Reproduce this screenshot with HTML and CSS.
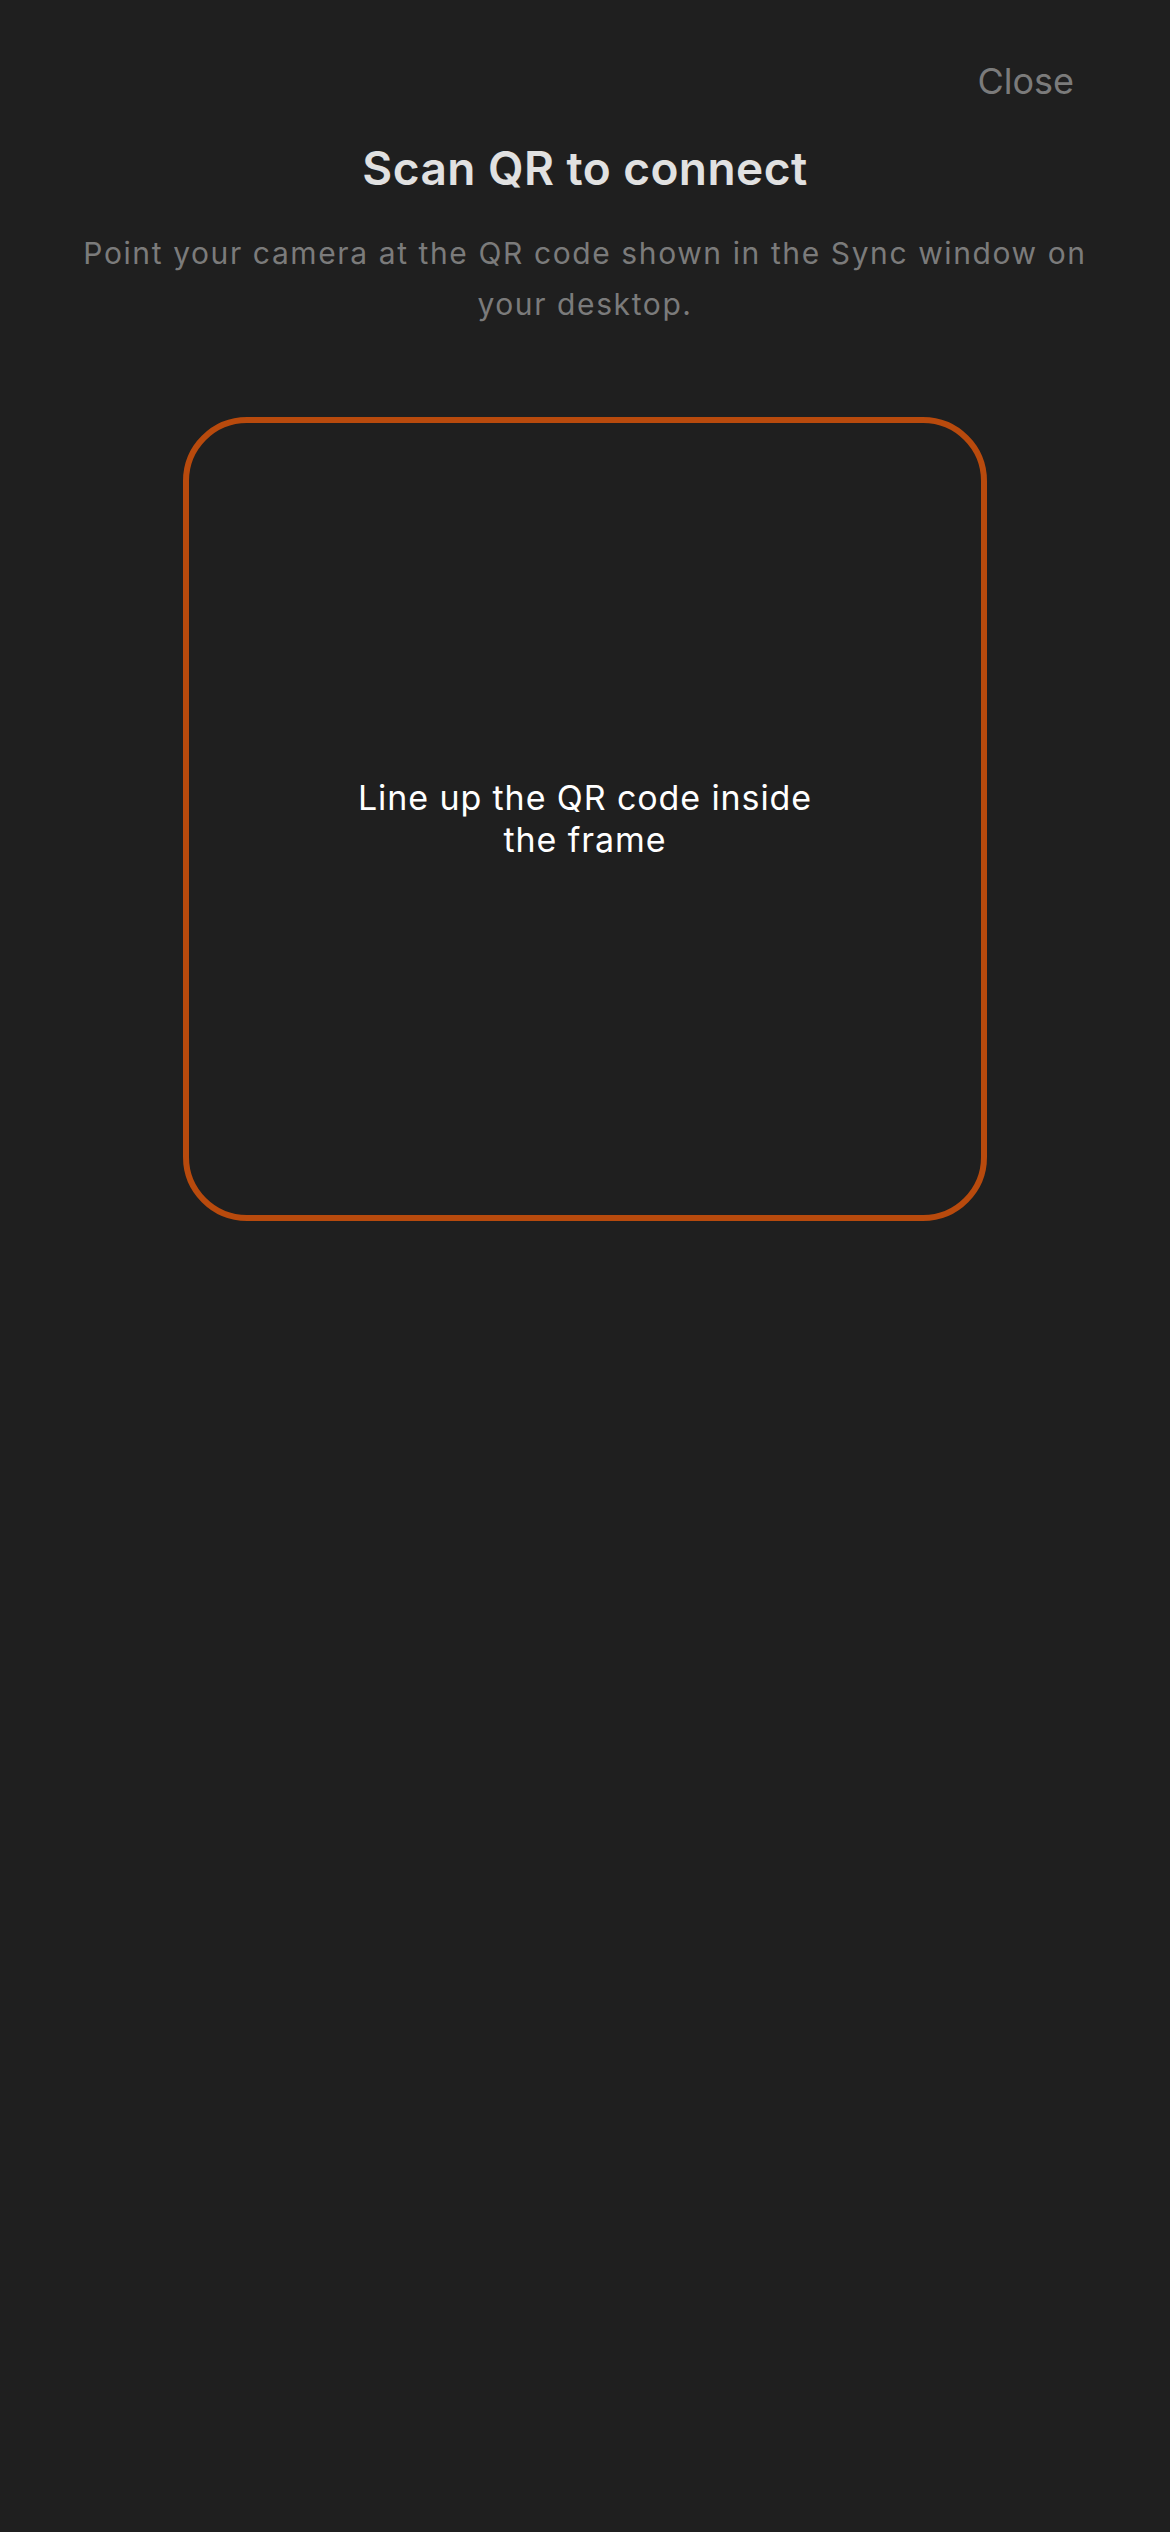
FILE: index.html
```html
<!DOCTYPE html>
<html lang="en">
<head>
<meta charset="utf-8">
<title>Scan QR to connect</title>
<link rel="stylesheet" href="styles.css">
</head>
<body>
<main class="screen">
  <header class="topbar">
    <button class="close-btn" type="button">Close</button>
  </header>
  <h1 class="title">Scan QR to connect</h1>
  <p class="subtitle">Point your camera at the QR code shown in the Sync window on your desktop.</p>
  <section class="scanner">
    <div class="frame">
      <p class="hint">Line up the QR code inside the frame</p>
    </div>
  </section>
</main>
</body>
</html>
```
FILE: styles.css
```css
html, body {
  margin: 0;
  padding: 0;
}
body {
  background: #1f1f1f;
  font-family: Inter, "Noto Sans", "Liberation Sans", sans-serif;
  min-height: 2532px;
}
.screen {
  display: flex;
  flex-direction: column;
  align-items: center;
}
.topbar {
  align-self: stretch;
  display: flex;
  justify-content: flex-end;
  padding: 59px 96px 0 0;
}
.close-btn {
  background: none;
  border: 0;
  padding: 0;
  margin: 0;
  font-family: inherit;
  font-size: 36px;
  line-height: 44px;
  color: #7b7b7b;
}
.title {
  margin: 37px 0 0;
  font-size: 46px;
  line-height: 56px;
  font-weight: 600;
  color: #e1e1e1;
  text-align: center;
  letter-spacing: 0.45px;
}
.subtitle {
  margin: 32px 0 0;
  width: 1040px;
  font-size: 30px;
  line-height: 51px;
  color: #7b7b7b;
  text-align: center;
  letter-spacing: 1.6px;
}
.scanner {
  margin-top: 87px;
}
.frame {
  box-sizing: border-box;
  width: 804px;
  height: 804px;
  border: 6px solid #b84a0d;
  border-radius: 64px;
  display: flex;
  align-items: center;
  justify-content: center;
}
.hint {
  margin: 0;
  max-width: 480px;
  font-size: 34px;
  line-height: 42px;
  color: #ffffff;
  text-align: center;
  letter-spacing: 0.9px;
}
```
